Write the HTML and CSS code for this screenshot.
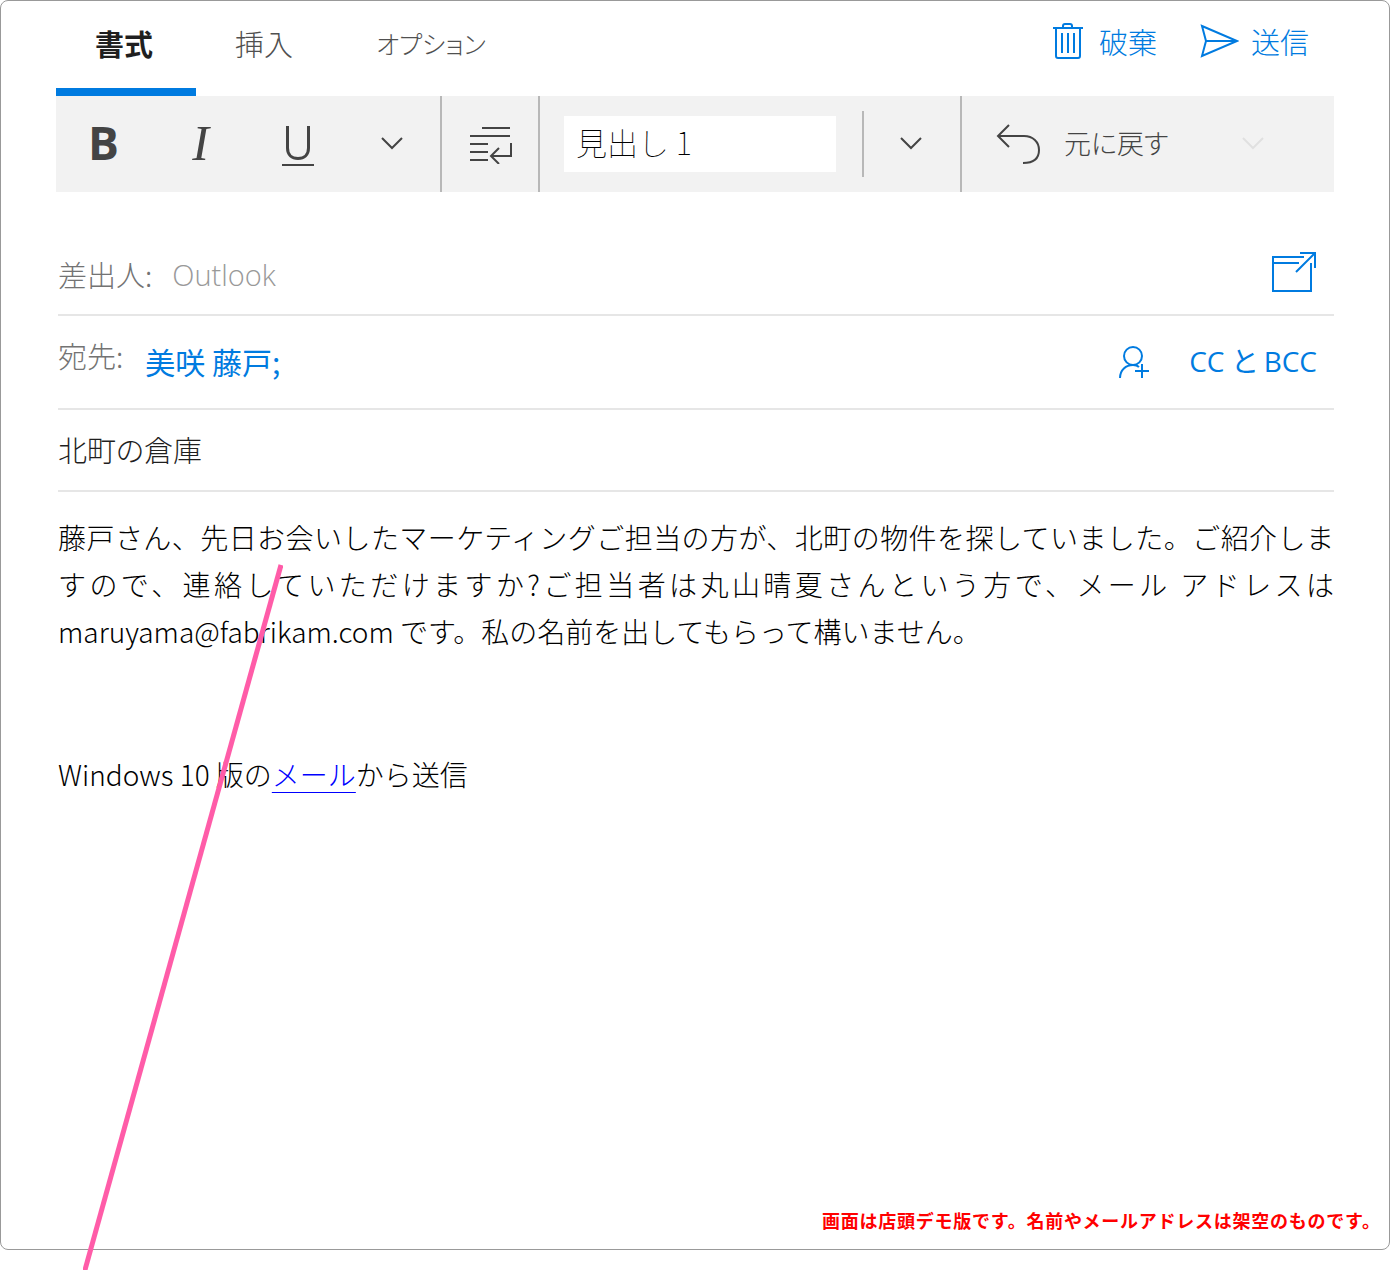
FILE: index.html
```html
<!DOCTYPE html>
<html lang="ja">
<head>
<meta charset="utf-8">
<meta name="viewport" content="width=device-width, initial-scale=1">
<title>メール</title>
<link rel="stylesheet" href="styles.css">
</head>
<body>
<main class="window">
  <header class="topbar">
    <nav class="tabs">
      <button type="button" class="tab tab-active">書式</button>
      <button type="button" class="tab">挿入</button>
      <button type="button" class="tab tab-kana">オプション</button>
    </nav>
    <div class="actions">
      <button type="button" class="action">
        <svg width="32" height="38" viewBox="0 0 32 38" fill="none" stroke="currentColor" stroke-width="2"><path d="M1 6H31M11 6V4Q11 2 13 2H18Q20 2 20 4V6M4 6V34Q4 36 6 36H26Q28 36 28 34V6M10 11V31M16 11V31M22 11V31"/></svg>
        <span>破棄</span>
      </button>
      <button type="button" class="action action-send">
        <svg width="40" height="34" viewBox="0 0 40 34" fill="none" stroke="currentColor" stroke-width="2"><path d="M3 2L38 17L3 32L7 17ZM7 17H38"/></svg>
        <span>送信</span>
      </button>
    </div>
  </header>

  <div class="toolbar">
    <div class="group group-format">
      <button type="button" class="tool tool-bold" aria-label="太字">B</button>
      <button type="button" class="tool tool-italic" aria-label="斜体">I</button>
      <button type="button" class="tool" aria-label="下線">
        <svg width="32" height="44" viewBox="0 0 32 44" fill="none" stroke="currentColor"><path stroke-width="3" d="M5.500 4V26C5.500 33 10 36.500 16 36.500S26.500 33 26.500 26V4"/><path stroke-width="2" d="M0 43H32"/></svg>
      </button>
      <button type="button" class="tool" aria-label="その他の文字書式">
        <svg width="24" height="16" viewBox="0 0 24 16" fill="none" stroke="currentColor" stroke-width="2"><path d="M1 2L11 12L21 2"/></svg>
      </button>
    </div>
    <div class="group group-paragraph">
      <button type="button" class="tool" aria-label="段落の書式">
        <svg width="44" height="40" viewBox="0 0 44 40" fill="none" stroke="currentColor" stroke-width="2"><path d="M14 4H42M2 12H42M2 20H20M2 28H20M2 36H20M43 19V32H23M31 24L23 32L31 40"/></svg>
      </button>
    </div>
    <div class="group group-style">
      <select class="style-select" aria-label="スタイル"><option>見出し 1</option></select>
      <button type="button" class="tool style-more" aria-label="スタイル一覧">
        <svg width="24" height="16" viewBox="0 0 24 16" fill="none" stroke="currentColor" stroke-width="2"><path d="M1 2L11 12L21 2"/></svg>
      </button>
    </div>
    <div class="group group-undo">
      <button type="button" class="undo">
        <svg width="46" height="42" viewBox="0 0 46 42" fill="none" stroke="currentColor" stroke-width="2"><path d="M15 2L4 13L15 24M4 13H30C39 13 45 19 45 27S40 40 29 40"/></svg>
        <span>元に戻す</span>
      </button>
      <button type="button" class="tool undo-more" aria-label="元に戻す履歴" disabled>
        <svg width="24" height="16" viewBox="0 0 24 16" fill="none" stroke="currentColor" stroke-width="2"><path d="M1 2L11 12L21 2"/></svg>
      </button>
    </div>
  </div>

  <div class="message">
    <div class="row row-from">
      <span class="label">差出人:</span>
      <span class="account">Outlook</span>
      <button type="button" class="row-end popout" aria-label="新しいウィンドウで開く">
        <svg width="46" height="42" viewBox="0 0 46 42" fill="none" stroke="currentColor" stroke-width="2"><path d="M33 6H2V40H40V12M2 12H28M25 21L44 2M29 2H44V17"/></svg>
      </button>
    </div>
    <div class="row row-to">
      <span class="label">宛先:</span>
      <a class="recipient" href="#recipient">美咲 藤戸;</a>
      <div class="row-end">
        <button type="button" class="action" aria-label="連絡先を追加">
          <svg width="30" height="34" viewBox="0 0 30 34" fill="none" stroke="currentColor" stroke-width="2"><circle cx="14" cy="11" r="9"/><path d="M1 33C1 25 7 20 14 20Q18 20 20 22M16 26H30M23 19V33"/></svg>
        </button>
        <button type="button" class="action latin">CC と BCC</button>
      </div>
    </div>
    <div class="row row-subject">
      <input class="subject" type="text" aria-label="件名" value="北町の倉庫">
    </div>
    <div class="body">
      <p>藤戸さん、先日お会いしたマーケティングご担当の方が、北町の物件を探していました。ご紹介しますので、連絡していただけますか?ご担当者は丸山晴夏さんという方で、メール アドレスは maruyama@fabrikam.com です。私の名前を出してもらって構いません。</p>
      <p class="signature">Windows 10 版の<a href="#mail">メール</a>から送信</p>
    </div>
  </div>

  <p class="notice">画面は店頭デモ版です。名前やメールアドレスは架空のものです。</p>
</main>
<svg class="callout" width="200" height="706" viewBox="0 0 200 706" aria-hidden="true"><path d="M198 1L0 713" stroke="#ff5ca8" stroke-width="5"/></svg>
</body>
</html>
```

FILE: styles.css
```css
* {
  box-sizing: border-box;
}

body {
  position: relative;
  min-height: 100vh;
  margin: 0;
  padding-bottom: 20px;
  display: flex;
  overflow-x: hidden;
  background: #fff;
  color: #1f1f1f;
  font-family: "Noto Sans CJK JP", sans-serif;
  font-size: 29px;
  font-weight: 300;
  font-feature-settings: "palt";
}

button,
input,
select {
  margin: 0;
  padding: 0;
  border: 0;
  background: none;
  color: inherit;
  font: inherit;
  font-feature-settings: inherit;
}

svg {
  display: block;
  flex: none;
}

p {
  margin: 0;
}

.window {
  flex: 1;
  min-width: 0;
  display: flex;
  flex-direction: column;
  padding: 0 55px;
  border: 1px solid #999;
  border-radius: 8px;
}

.topbar {
  display: flex;
  justify-content: space-between;
  height: 95px;
}

.tabs {
  display: flex;
}

.tab {
  width: 140px;
  padding: 0 4px 4px 0;
  border-bottom: 8px solid transparent;
  color: #505050;
  white-space: nowrap;
}

.tab-active {
  border-color: #007be0;
  color: #1f1f1f;
  font-weight: 700;
}

.tab-kana {
  width: 190px;
  padding-right: 0;
  font-size: 25px;
}

.actions {
  display: flex;
  align-items: center;
  gap: 42px;
  padding: 0 25px 15px 0;
}

.action {
  display: flex;
  align-items: center;
  gap: 15px;
  color: #007be0;
}

.action-send {
  gap: 12px;
}

.toolbar {
  display: flex;
  height: 96px;
  background: #f2f2f2;
  color: #444;
}

.group {
  display: flex;
  align-items: center;
  border-right: 2px solid #b8b8b8;
}

.group-format {
  width: 386px;
}

.tool {
  display: flex;
  flex: 1;
  align-items: center;
  justify-content: center;
  height: 100%;
}

.tool-bold {
  padding: 0 2px 4px 0;
  font-family: "Open Sans", sans-serif;
  font-size: 46px;
  font-weight: 700;
}

.tool-italic {
  padding: 0 2px 2px 0;
  font-family: "Liberation Serif", serif;
  font-size: 50px;
  font-style: italic;
}

.group-paragraph {
  width: 98px;
}

.group-style {
  width: 422px;
  padding-left: 24px;
}

.style-select {
  appearance: none;
  width: 272px;
  height: 56px;
  padding: 0 12px 6px;
  background: #fff;
  color: #000;
  font-size: 31px;
  font-weight: 100;
  font-feature-settings: normal;
}

.style-more {
  height: 66px;
  margin-left: 26px;
  border-left: 2px solid #b8b8b8;
}

.group-undo {
  flex: 1;
  justify-content: space-between;
  padding: 0 68px 0 32px;
  border-right: 0;
}

.undo {
  display: flex;
  align-items: center;
  gap: 24px;
  font-size: 27px;
}

.undo span {
  padding-bottom: 4px;
}

.undo-more {
  flex: none;
  color: #e0e0e0;
}

.message {
  flex: 1;
  padding: 42px 0 0 2px;
}

.row {
  display: flex;
  align-items: center;
  border-bottom: 2px solid #e6e6e6;
}

.row-from {
  height: 82px;
}

.row-to {
  height: 94px;
}

.row-subject {
  height: 82px;
  padding-bottom: 2px;
}

.label {
  color: #737373;
}

.row-to .label {
  padding-bottom: 14px;
}

.account {
  margin-left: 20px;
  color: #999;
  font-family: "Open Sans", sans-serif;
}

.row-end {
  display: flex;
  align-items: center;
  gap: 40px;
  margin-left: auto;
  padding-right: 17px;
  color: #007be0;
}

.popout {
  padding-bottom: 4px;
}

.recipient {
  margin-left: 22px;
  padding-bottom: 2px;
  color: #007be0;
  font-size: 30px;
  font-weight: 400;
  text-decoration: none;
}

.latin {
  padding-bottom: 4px;
  font-family: "Open Sans", "Noto Sans CJK JP", sans-serif;
  font-size: 28px;
  font-weight: 400;
}

.subject {
  flex: 1;
  min-width: 0;
}

.body {
  padding-top: 22px;
  color: #000;
  font-size: 28px;
  line-height: 47px;
  font-feature-settings: normal;
  text-align: justify;
}

.signature {
  margin-top: 96px;
}

.signature a {
  color: #00f;
  text-decoration-thickness: 1px;
  text-underline-offset: 6px;
}

.notice {
  align-self: flex-end;
  width: 558px;
  max-width: 100%;
  margin: 0 -46px 15px 0;
  color: #f00;
  font-size: 18px;
  font-weight: 700;
  font-feature-settings: normal;
  line-height: 28px;
  text-align: justify;
  text-align-last: justify;
}

/* Pointer line drawn across the message */
.callout {
  position: absolute;
  top: 564px;
  left: 83px;
  pointer-events: none;
}
```
